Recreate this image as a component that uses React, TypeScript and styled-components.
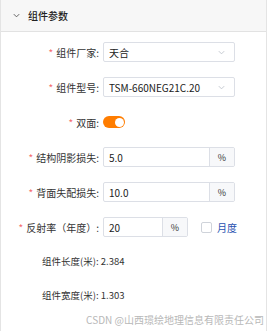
import React, { useState } from "react";
import styled, { createGlobalStyle } from "styled-components";

const GlobalStyle = createGlobalStyle`
  html, body {
    margin: 0;
    padding: 0;
    background: #ffffff;
  }
  body {
    font-family: "Noto Sans CJK SC", "Noto Sans", sans-serif;
    color: #333333;
  }
`;

type Field = {
  label: string;
  kind: "select" | "switch" | "percent";
  value?: string;
  narrow?: boolean;
  monthly?: boolean;
};

const fields: Field[] = [
  { label: "组件厂家:", kind: "select", value: "天合" },
  { label: "组件型号:", kind: "select", value: "TSM-660NEG21C.20" },
  { label: "双面:", kind: "switch" },
  { label: "结构阴影损失:", kind: "percent", value: "5.0" },
  { label: "背面失配损失:", kind: "percent", value: "10.0" },
  { label: "反射率（年度）:", kind: "percent", value: "20", narrow: true, monthly: true },
];

const infos = [
  { label: "组件长度(米):", value: "2.384" },
  { label: "组件宽度(米):", value: "1.303" },
];

const ChevronDown = ({ color, size }: { color: string; size: number }) => (
  <svg width={size} height={size} viewBox="0 0 10 10" fill="none">
    <path d="M2 3.5 L5 6.5 L8 3.5" stroke={color} strokeWidth="1" />
  </svg>
);

export default function App() {
  const [bifacial, setBifacial] = useState(true);
  const [monthly, setMonthly] = useState(false);

  return (
    <>
      <GlobalStyle />
      <StyledPanel>
        <StyledHeader>
          <ChevronDown color="#555" size={9} />
          <StyledTitle>组件参数</StyledTitle>
        </StyledHeader>
        <StyledForm>
          {fields.map((f) => (
            <StyledRow key={f.label}>
              <StyledLabel>
                <StyledStar>*</StyledStar>
                {f.label}
              </StyledLabel>
              {f.kind === "select" && (
                <StyledSelect>
                  <span>{f.value}</span>
                  <ChevronDown color="#c0c4cc" size={9} />
                </StyledSelect>
              )}
              {f.kind === "switch" && (
                <StyledSwitch $on={bifacial} onClick={() => setBifacial(!bifacial)}>
                  <StyledKnob $on={bifacial} />
                </StyledSwitch>
              )}
              {f.kind === "percent" && (
                <>
                  <StyledGroup $narrow={!!f.narrow}>
                    <StyledInput>{f.value}</StyledInput>
                    <StyledAddon>%</StyledAddon>
                  </StyledGroup>
                  {f.monthly && (
                    <StyledCheck onClick={() => setMonthly(!monthly)}>
                      <StyledBox $checked={monthly} />
                      <span>月度</span>
                    </StyledCheck>
                  )}
                </>
              )}
            </StyledRow>
          ))}
        </StyledForm>
        <StyledInfoList>
          {infos.map((i) => (
            <StyledInfo key={i.label}>
              {i.label} {i.value}
            </StyledInfo>
          ))}
        </StyledInfoList>
        <StyledWatermark>CSDN @山西璟绘地理信息有限责任公司</StyledWatermark>
      </StyledPanel>
    </>
  );
}

const StyledPanel = styled.div`
  position: relative;
  width: 265px;
  height: 331px;
  border-left: 1px solid #e4e4e4;
  border-right: 1px solid #e4e4e4;
  box-sizing: content-box;
`;

const StyledHeader = styled.div`
  height: 31px;
  display: flex;
  align-items: center;
  gap: 7px;
  padding-left: 11px;
  background: #f7f7f7;
  border-bottom: 1px solid #e2e2e2;
`;

const StyledTitle = styled.span`
  font-size: 10px;
  color: #222;
  font-weight: 500;
`;

const StyledForm = styled.div`
  display: flex;
  flex-direction: column;
  gap: 15px;
  padding-top: 10px;
`;

const StyledRow = styled.div`
  display: flex;
  align-items: center;
  height: 20px;
`;

const StyledLabel = styled.div`
  width: 98px;
  padding-right: 4px;
  text-align: right;
  font-size: 10px;
  color: #333;
  white-space: nowrap;
`;

const StyledStar = styled.span`
  color: #f56c6c;
  margin-right: 3px;
`;

const StyledSelect = styled.div`
  width: 132px;
  height: 20px;
  box-sizing: border-box;
  border: 1px solid #dcdfe6;
  border-radius: 2px;
  display: flex;
  align-items: center;
  justify-content: space-between;
  padding: 0 8px 0 5px;
  font-size: 10px;
  color: #222;
`;

const StyledSwitch = styled.div<{ $on: boolean }>`
  width: 22px;
  height: 12px;
  border-radius: 6px;
  background: ${(p) => (p.$on ? "#ff7d00" : "#dcdfe6")};
  position: relative;
  cursor: pointer;
`;

const StyledKnob = styled.div<{ $on: boolean }>`
  position: absolute;
  top: 1.5px;
  left: ${(p) => (p.$on ? "11.5px" : "1.5px")};
  width: 9px;
  height: 9px;
  border-radius: 50%;
  background: #fff;
`;

const StyledGroup = styled.div<{ $narrow: boolean }>`
  width: ${(p) => (p.$narrow ? "85px" : "132px")};
  height: 20px;
  box-sizing: border-box;
  display: flex;
  border: 1px solid #dcdfe6;
  border-radius: 2px;
  overflow: hidden;
`;

const StyledInput = styled.div`
  flex: 1;
  display: flex;
  align-items: center;
  padding-left: 5px;
  font-size: 10px;
  color: #222;
`;

const StyledAddon = styled.div`
  width: 24px;
  border-left: 1px solid #dcdfe6;
  background: #f7f8fa;
  display: flex;
  align-items: center;
  justify-content: center;
  font-size: 9px;
  color: #333;
`;

const StyledCheck = styled.label`
  display: flex;
  align-items: center;
  gap: 5px;
  margin-left: 13px;
  font-size: 10px;
  color: #1f4fb0;
  cursor: pointer;
`;

const StyledBox = styled.span<{ $checked: boolean }>`
  width: 11px;
  height: 11px;
  box-sizing: border-box;
  border: 1px solid #cfd3da;
  border-radius: 2px;
  background: ${(p) => (p.$checked ? "#1f4fb0" : "#fff")};
`;

const StyledInfoList = styled.div`
  display: flex;
  flex-direction: column;
  gap: 14px;
  padding: 14px 0 0 41px;
`;

const StyledInfo = styled.div`
  height: 20px;
  display: flex;
  align-items: center;
  font-size: 9.5px;
  color: #333;
  white-space: pre;
`;

const StyledWatermark = styled.div`
  position: absolute;
  right: 2px;
  top: 312px;
  font-size: 10px;
  color: #b8b8b8;
  white-space: nowrap;
`;
